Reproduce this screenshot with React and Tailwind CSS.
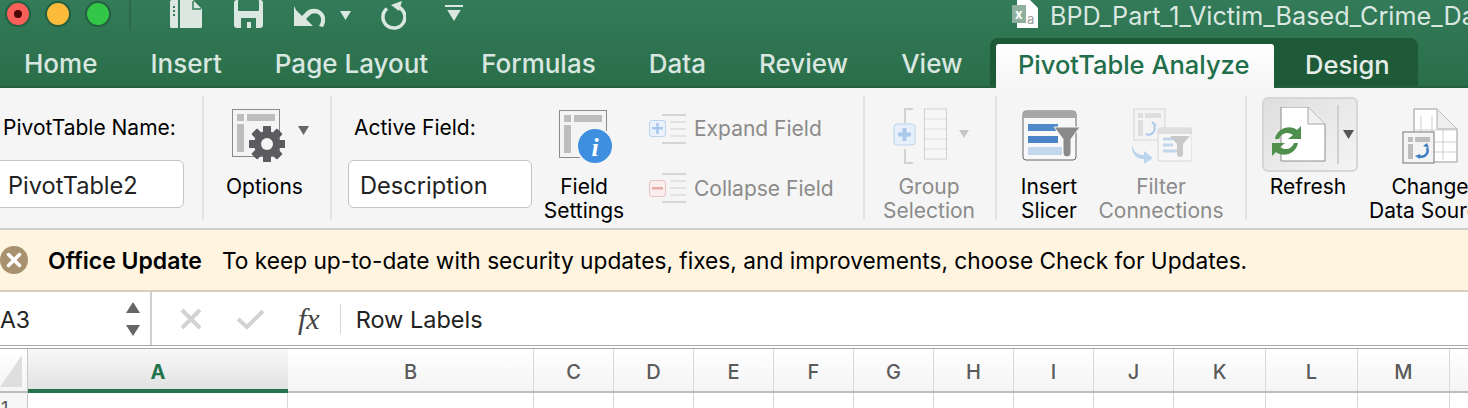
import React from 'react';

const FONT = { fontFamily: 'Inter, "Liberation Sans", sans-serif' };

const Caret = ({ className = '', color = '#666' }) => (
  <svg width="11" height="9" viewBox="0 0 11 9" className={`shrink-0 ${className}`}>
    <path d="M0 0h11L5.500 9z" fill={color} />
  </svg>
);

const TrafficLight = ({ bg, dot }) => (
  <div className={`w-[26px] h-[26px] rounded-full border-2 border-[#245f42] flex items-center justify-center ${bg}`}>
    {dot && <div className="w-2 h-2 rounded-full bg-[#4a0505]" />}
  </div>
);

const PivotGrid = ({ children, w = 48, h = 48 }) => (
  <svg width={w + 14} height={h + 14} viewBox="0 0 62 62" className="overflow-visible">
    <rect x="0.500" y="0.500" width="47" height="47" fill="#f4f4f4" stroke="#8a8a8a" />
    <rect x="5" y="5" width="7" height="7" fill="#bdbdbd" />
    <rect x="15" y="5" width="28" height="7" fill="#bdbdbd" />
    <rect x="5" y="15" width="7" height="28" fill="#bdbdbd" />
    {children}
  </svg>
);

const gearTeeth = [0, 45, 90, 135, 180, 225, 270, 315];

const RibbonButton = ({ lines, icon, disabled, width, className = '' }) => (
  <div className={`flex flex-col items-center shrink-0 ${className}`} style={{ width }}>
    <div className="h-[79px] shrink-0 flex items-center justify-center">{icon}</div>
    {lines.map((l) => (
      <div key={l} className={`text-[21px] leading-[24px] whitespace-nowrap ${disabled ? 'text-[#8b8b8b]' : 'text-black'}`}>{l}</div>
    ))}
  </div>
);

const Outline = ({ color, border, bg, plus }) => (
  <div className="flex items-center">
    <div className={`w-[17px] h-[17px] rounded-[3px] border flex items-center justify-center relative z-10 ${border} ${bg}`}>
      <svg width="11" height="11" viewBox="0 0 11 11">
        <rect x="0" y="4" width="11" height="2.500" fill={color} />
        {plus && <rect x="4.200" y="0" width="2.500" height="11" fill={color} />}
      </svg>
    </div>
    <div className="flex flex-col gap-[5px] ml-[-4px]">
      <div className="w-[24px] h-[2px] bg-[#d5d5d5]" />
      <div className="w-[16px] h-[2px] bg-[#e2e2e2] ml-[8px]" />
      <div className="w-[16px] h-[2px] bg-[#e2e2e2] ml-[8px]" />
      <div className="w-[16px] h-[2px] bg-[#e2e2e2] ml-[8px]" />
      <div className="w-[24px] h-[2px] bg-[#d5d5d5]" />
    </div>
  </div>
);

const Group = ({ width, children, className = '' }) => (
  <div className={`shrink-0 h-[124px] my-2 border-r-2 border-[#e3e3e3] ${className}`} style={{ width }}>
    {children}
  </div>
);

const tabs = ['Home', 'Insert', 'Page Layout', 'Formulas', 'Data', 'Review', 'View'];
const columns = [
  ['C', 80], ['D', 80], ['E', 80], ['F', 80], ['G', 80], ['H', 80], ['I', 80], ['J', 80], ['K', 92], ['L', 92], ['M', 92],
];

export default function App() {
  return (
    <div className="w-[1468px] h-[408px] overflow-hidden bg-white text-black" style={FONT}>
      {/* title + tabs */}
      <div className="h-[88px] bg-gradient-to-b from-[#337b59] to-[#2a6e49] border-b-2 border-[#245f40]">
        <div className="h-[38px] flex items-start overflow-hidden">
          <div className="flex shrink-0 gap-[14px] ml-[5px] mt-px">
            <TrafficLight bg="bg-[#fb5f5a]" dot />
            <TrafficLight bg="bg-[#fdbb3c]" />
            <TrafficLight bg="bg-[#33c748]" />
          </div>
          <div className="w-[2px] h-[30px] shrink-0 bg-[#2a6a4b] ml-[18px]" />
          <svg width="33" height="28" viewBox="0 0 33 28" className="shrink-0 ml-[39px]">
            <path d="M1.500 0H23l9 9v17.500a1.500 1.500 0 0 1-1.500 1.500h-29A1.500 1.500 0 0 1 0 26.500V1.500A1.500 1.500 0 0 1 1.500 0z" fill="#dbe8e1" />
            <rect x="8" y="0" width="2" height="28" fill="#337b59" />
            <path d="M23 1v8h8" fill="none" stroke="#337b59" strokeWidth="1.500" />
            <path d="M3 7h2M3 11h2M3 15h2" stroke="#337b59" strokeWidth="2" />
          </svg>
          <svg width="29" height="28" viewBox="0 0 29 28" className="shrink-0 ml-[31px]">
            <path d="M3 0h23a3 3 0 0 1 3 3v22a3 3 0 0 1-3 3H3a3 3 0 0 1-3-3V3a3 3 0 0 1 3-3z" fill="#dbe8e1" />
            <rect x="4" y="0" width="21" height="11" rx="1" fill="#337b59" />
            <path d="M7 28V18h15v10h-5v-6h-4v6z" fill="#337b59" />
          </svg>
          <svg width="31" height="26" viewBox="0 0 31 26" className="shrink-0 ml-[31px] mt-[2px]">
            <path d="M0 4v20h19L12 17l3-3c4-4 9-3 11 0 2 3 1 7-1 10l4 1c3-5 3-10 0-14-4-5-12-6-17-1l-4 4-6-6z" fill="#dbe8e1" />
          </svg>
          <Caret className="ml-[15px] mt-[11px]" color="#dbe8e1" />
          <svg width="26" height="30" viewBox="0 0 26 30" className="shrink-0 ml-[29px]">
            <path d="M7 8.500A11 11 0 1 0 17 6.500" fill="none" stroke="#dbe8e1" strokeWidth="3.500" />
            <path d="M11 5 L22 1 L19 11 z" fill="#dbe8e1" />
          </svg>
          <div className="flex flex-col shrink-0 items-center gap-[3px] ml-[39px] mt-[5px]">
            <div className="w-[18px] h-[2px] bg-[#dbe8e1]" />
            <Caret color="#dbe8e1" className="w-[16px] h-[11px]" />
          </div>
          <svg width="28" height="28" viewBox="0 0 28 28" className="shrink-0 ml-[549px]">
            <path d="M5 0h13l8 8v20H5z" fill="#fff" />
            <rect x="0" y="5" width="14" height="18" fill="#8fb09e" />
            <text x="3" y="19" fontSize="13" fill="#fff" fontWeight="700">x</text>
            <text x="15" y="24" fontSize="13" fill="#9a9a9a">a</text>
          </svg>
          <div className="ml-[10px] mt-px shrink-0 text-[25.200px] leading-[30px] text-[#dbe8e1] whitespace-nowrap">BPD_Part_1_Victim_Based_Crime_Data</div>
        </div>
        <div className="h-[48px] flex items-end">
          <div className="flex gap-[53px] ml-6 h-[46px] items-center text-[26px] font-medium text-[#d9e7e0]">
            {tabs.map((t) => <div key={t} className="whitespace-nowrap">{t}</div>)}
          </div>
          <div className="absolute left-[990px] top-[38px] w-[428px] h-[48px] bg-[#1f5a38] rounded-t-lg pl-[6px] pt-[6px] flex">
            <div className="w-[278px] h-[44px] bg-gradient-to-b from-white to-[#f5f5f5] rounded-t-[3px] pl-[22px] text-[25.500px] leading-[42px] font-medium text-[#1e6f4a] whitespace-nowrap">PivotTable Analyze</div>
            <div className="ml-[31px] text-[25.500px] leading-[42px] font-medium text-[#e6eee9]">Design</div>
          </div>
        </div>
      </div>

      {/* ribbon */}
      <div className="h-[142px] bg-[#f5f5f5] border-b-2 border-[#cfcfcf] flex">
        <Group width={204}>
          <div className="pl-[3px] pt-[20px] text-[21px] leading-[24px] whitespace-nowrap">PivotTable Name:</div>
          <div className="w-[194px] h-[48px] -ml-[10px] mt-[20px] bg-white border border-[#c4c4c4] rounded-md pl-[17px] text-[23.600px] leading-[50px] text-[#222]">PivotTable2</div>
        </Group>
        <Group width={128}>
          <div className="relative pl-[28px] pt-[13px] h-[79px]">
            <PivotGrid>
              <g transform="translate(35 35)" fill="#5c5c60">
                {gearTeeth.map((a) => <rect key={a} x="-4" y="-18" width="8" height="36" rx="1" transform={`rotate(${a})`} />)}
                <circle r="13" />
                <circle r="6" fill="#f4f4f4" />
              </g>
            </PivotGrid>
            <Caret className="absolute left-[94px] top-[30px]" />
          </div>
          <div className="text-[21px] leading-[24px] pl-[22px]">Options</div>
        </Group>
        <Group width={533} className="flex">
          <div className="w-[200px] shrink-0 pl-[16px]">
            <div className="pl-[6px] pt-[20px] text-[21px] leading-[24px] whitespace-nowrap">Active Field:</div>
            <div className="w-[184px] h-[48px] mt-[20px] bg-white border border-[#c4c4c4] rounded-md pl-[11px] text-[23.600px] leading-[50px] text-[#222]">Description</div>
          </div>
          <RibbonButton
            width={104}
            lines={['Field', 'Settings']}
            icon={
              <div className="pl-[12px] pt-[10px]">
                <PivotGrid>
                  <circle cx="36" cy="36" r="18" fill="#3f8fe0" stroke="#f5f5f5" strokeWidth="2" />
                  <text x="36" y="46" textAnchor="middle" fontSize="26" fontWeight="700" fontStyle="italic" fontFamily="Liberation Serif, serif" fill="#fff">i</text>
                </PivotGrid>
              </div>
            }
          />
          <div className="pl-[13px] pt-[17px] flex flex-col gap-[28px]">
            <div className="flex items-center gap-[8px] text-[21px] text-[#8b8b8b] whitespace-nowrap">
              <Outline plus color="#a9c8ea" border="border-[#bcd3ec]" bg="bg-[#eaf2fb]" />
              <span>Expand Field</span>
            </div>
            <div className="flex items-center gap-[8px] text-[21px] text-[#8b8b8b] whitespace-nowrap">
              <Outline color="#e8a9a9" border="border-[#e6c3c3]" bg="bg-[#fbeeee]" />
              <span>Collapse Field</span>
            </div>
          </div>
        </Group>
        <Group width={132}>
          <RibbonButton
            width={128}
            disabled
            lines={['Group', 'Selection']}
            icon={
              <svg width="84" height="56" viewBox="0 0 84 56" className="ml-[12px]">
                <path d="M20 1h-8v14M12 41v14h8" fill="none" stroke="#d3d3d3" strokeWidth="2" />
                <rect x="31.500" y="1" width="22" height="50" fill="#f7f7f7" stroke="#d0d0d0" />
                <path d="M32 11h21M32 21h21M32 31h21M32 41h21" stroke="#dcdcdc" />
                <rect x="1" y="16" width="21" height="21" rx="3" fill="#e6f0fa" stroke="#bcd3ec" />
                <path d="M11.500 20v13M5 26.500h13" stroke="#a9c8ea" strokeWidth="4" />
                <path d="M66 22h10l-5 8z" fill="#c7c7c7" />
              </svg>
            }
          />
        </Group>
        <Group width={250} className="flex">
          <RibbonButton
            width={104}
            lines={['Insert', 'Slicer']}
            icon={
              <svg width="60" height="52" viewBox="0 0 60 52" className="overflow-visible ml-[6px]">
                <rect x="1" y="1" width="53" height="49" rx="3" fill="#f8f8f8" stroke="#666" />
                <path d="M1 8V4a3 3 0 0 1 3-3h47a3 3 0 0 1 3 3v4z" fill="#a7a7a7" />
                <rect x="6" y="14" width="30" height="7" fill="#5089c9" />
                <rect x="6" y="26" width="30" height="7" fill="#4b84c6" />
                <rect x="6" y="37" width="34" height="8" fill="#c2d6ec" />
                <path d="M32 17h26l-9 12v14a3 3 0 0 1-8 0V29z" fill="#8a8a8a" stroke="#f5f5f5" />
              </svg>
            }
          />
          <RibbonButton
            width={120}
            disabled
            lines={['Filter', 'Connections']}
            icon={
              <svg width="60" height="56" viewBox="0 0 60 56" className="ml-[2px]">
                <rect x="2" y="1" width="31" height="31" fill="#f4f4f4" stroke="#d5d5d5" />
                <rect x="6" y="5" width="5" height="5" fill="#dedede" />
                <rect x="13" y="5" width="16" height="5" fill="#dedede" />
                <rect x="6" y="12" width="5" height="16" fill="#dedede" />
                <path d="M22 18a6 6 0 0 1-8 8M20 14l4 4M16 24" fill="none" stroke="#a9c8ea" strokeWidth="2" />
                <path d="M0 36c1 8 6 11 12 11v-4l9 7-9 6v-5C3 51-1 44 0 36z" fill="#bcd5ef" />
                <rect x="26" y="20" width="34" height="33" rx="2" fill="#f7f7f7" stroke="#d5d5d5" />
                <rect x="26" y="20" width="34" height="6" fill="#dedede" />
                <path d="M31 31h10M31 37h10M31 43h14" stroke="#c2d6ec" strokeWidth="3" />
                <path d="M38 28h20l-7 8v10a3 3 0 0 1-6 0V36z" fill="#c8c8c8" />
              </svg>
            }
          />
        </Group>
        <div className="w-[110px] shrink-0 pt-[9px] pl-[15px]">
          <div className="w-[96px] h-[75px] rounded-md border-2 border-[#d6d6d6] bg-gradient-to-br from-[#dedede] to-[#f4f4f4] flex relative">
            <svg width="66" height="56" viewBox="0 0 66 56" className="ml-[8px] mt-[8px]">
              <path d="M9 0h27l17 17v37H9z" fill="#fff" stroke="#8c8c8c" />
              <path d="M36 0v17h17" fill="#f1f1f1" stroke="#a5a5a5" />
              <g transform="translate(0 7)">
                <path d="M3 25C5 14 18 10 25 16l4-4v13H16l5-4c-5-4-12-2-14 4zM26 29c-2 11-15 15-22 9l-4 4V29h13l-5 4c5 4 12 2 14-4z" fill="#4f8f4d" />
              </g>
            </svg>
            <div className="absolute left-[73px] top-[6px] w-[2px] h-[59px] bg-[#d0d0d0]" />
            <Caret className="absolute left-[79px] top-[31px]" color="#555" />
          </div>
          <div className="text-[21px] leading-[24px] text-center w-[92px] mt-[3px] whitespace-nowrap">Refresh</div>
        </div>
        <RibbonButton
          width={130}
          className="mt-2 ml-[8px]"
          lines={['Change', 'Data Source']}
          icon={
            <svg width="56" height="56" viewBox="0 0 56 56">
              <path d="M12 1h23l20 20v33H12z" fill="#fff" stroke="#999" />
              <path d="M35 1v20h20" fill="#eee" stroke="#aaa" />
              <path d="M19 8v44M30 8v44M41 22v30M12 22h42M12 34h42M12 44h42" stroke="#cfcfcf" />
              <rect x="1" y="24" width="31" height="31" fill="#f4f4f4" stroke="#777" />
              <rect x="6" y="29" width="5" height="5" fill="#bdbdbd" />
              <rect x="13" y="29" width="15" height="5" fill="#bdbdbd" />
              <rect x="6" y="36" width="5" height="15" fill="#bdbdbd" />
              <path d="M25 40a6 6 0 0 1-8 8" fill="none" stroke="#3f7fc4" strokeWidth="2.500" />
              <path d="M21 38l4-3 2 5zM13 48l5-2v5z" fill="#3f7fc4" />
            </svg>
          }
        />
      </div>

      {/* update banner */}
      <div className="h-[62px] bg-[#fef4e0] border-b-2 border-[#d8d0bd] flex items-center text-[22.700px] whitespace-nowrap">
        <svg width="28" height="28" viewBox="0 0 28 28" className="ml-0">
          <circle cx="14" cy="14" r="14" fill="#a8916f" />
          <path d="M8.500 8.500l11 11M19.500 8.500l-11 11" stroke="#fff" strokeWidth="3.500" strokeLinecap="round" />
        </svg>
        <span className="ml-[20px] text-[23px] font-semibold pt-[3px]">Office Update</span>
        <span className="ml-[20px] pt-[3px]">To keep up-to-date with security updates, fixes, and improvements, choose Check for Updates.</span>
      </div>

      {/* formula bar */}
      <div className="h-[53px] bg-white flex items-center">
        <div className="w-[150px] h-full flex items-center justify-between">
          <span className="text-[23px] text-[#222] pt-[4px]">A3</span>
          <div className="flex flex-col gap-[12px] mr-[10px]">
            <svg width="14" height="11" viewBox="0 0 14 11"><path d="M7 0l7 11H0z" fill="#666" /></svg>
            <svg width="14" height="11" viewBox="0 0 14 11"><path d="M7 11L0 0h14z" fill="#666" /></svg>
          </div>
        </div>
        <div className="w-[2px] h-full bg-[#cfcfcf]" />
        <svg width="22" height="22" viewBox="0 0 22 22" className="ml-[28px]">
          <path d="M2 2l18 18M20 2L2 20" stroke="#d2d2d2" strokeWidth="4" />
        </svg>
        <svg width="30" height="22" viewBox="0 0 30 22" className="ml-[34px]">
          <path d="M2 11l9 8L27 3" fill="none" stroke="#d2d2d2" strokeWidth="4" />
        </svg>
        <span className="ml-[32px] text-[30px] leading-none italic text-[#444]" style={{ fontFamily: '"Liberation Serif", serif' }}>fx</span>
        <div className="w-[1px] h-[30px] bg-[#d5d5d5] ml-[20px]" />
        <span className="ml-[15px] text-[23.500px] text-[#222] pt-[2px]">Row Labels</span>
      </div>

      <div className="h-[4px] border-y border-[#a8a8a8] bg-white" />

      {/* column headers */}
      <div className="h-[44px] flex bg-gradient-to-b from-white to-[#f4f4f4] border-b-2 border-[#bdbdbd]">
        <div className="w-[28px] shrink-0 border-r border-[#c8c8c8] flex items-end">
          <svg width="22" height="32" viewBox="0 0 22 32" className="mb-[4px]"><path d="M22 0v32H0z" fill="#dedede" /></svg>
        </div>
        <div className="w-[260px] shrink-0 h-[44px] bg-gradient-to-b from-[#f8f8f8] to-[#e2e2e2] border-b-[4px] border-[#22744c] text-center text-[20px] leading-[46px] font-bold text-[#22744c]">A</div>
        <div className="w-[245px] shrink-0 text-center text-[20px] leading-[46px] font-medium text-[#5a5a5a]">B</div>
        {columns.map(([c, w]) => (
          <div key={c} className="shrink-0 border-l border-[#d8d8d8] text-center text-[20px] leading-[46px] font-medium text-[#5a5a5a]" style={{ width: w }}>{c}</div>
        ))}
        <div className="flex-1 border-l border-[#d8d8d8]" />
      </div>

      {/* first row */}
      <div className="h-[16px] flex bg-white">
        <div className="w-[28px] shrink-0 border-r border-[#c8c8c8] bg-[#f6f6f6] pl-px pt-[4px] text-[18px] leading-[24px] text-[#555]">1</div>
        <div className="w-[260px] shrink-0 border-r border-[#d8d8d8]" />
        <div className="w-[245px] shrink-0" />
        {columns.map(([c, w]) => (
          <div key={c} className="shrink-0 border-l border-[#d8d8d8]" style={{ width: w }} />
        ))}
        <div className="flex-1 border-l border-[#d8d8d8]" />
      </div>
    </div>
  );
}
